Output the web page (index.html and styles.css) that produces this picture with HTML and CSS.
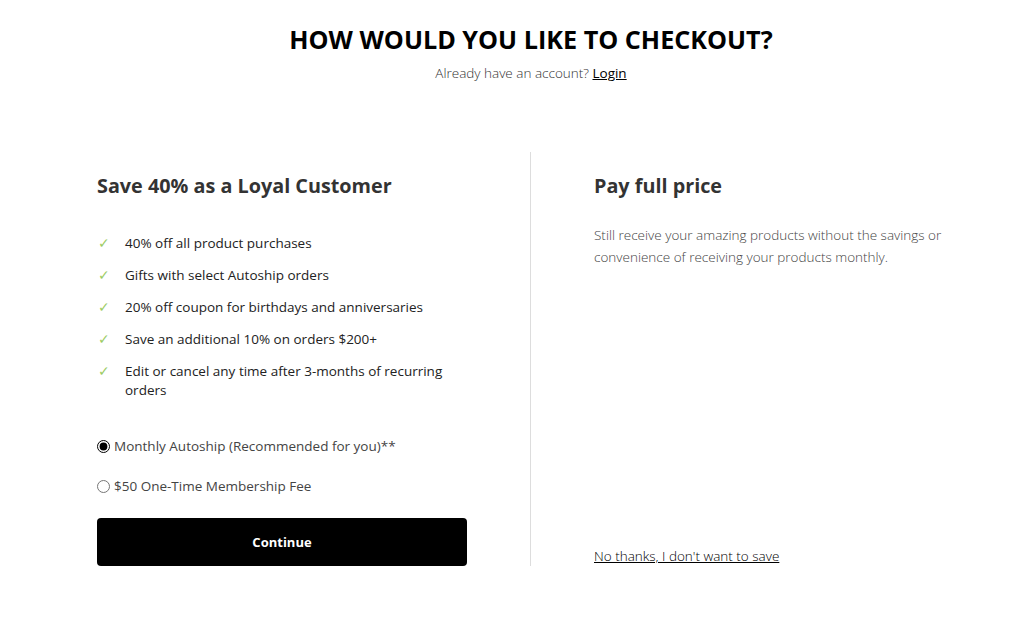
FILE: index.html
```html
<!DOCTYPE html>
<html lang="en">
<head>
    <meta charset="UTF-8">
    <meta name="viewport" content="width=device-width, initial-scale=1.0">
    <title>Checkout</title>
    <link rel="stylesheet" href="styles.css">
</head>
<body>
    <header class="page-head">
        <h1>HOW WOULD YOU LIKE TO CHECKOUT?</h1>
        <p class="login-line">Already have an account? <a href="#">Login</a></p>
    </header>

    <main class="options">
        <section class="option option-loyal">
            <h2>Save 40% as a Loyal Customer</h2>
            <ul class="perks">
                <li><span class="tick">&#10003;</span><span>40% off all product purchases</span></li>
                <li><span class="tick">&#10003;</span><span>Gifts with select Autoship orders</span></li>
                <li><span class="tick">&#10003;</span><span>20% off coupon for birthdays and anniversaries</span></li>
                <li><span class="tick">&#10003;</span><span>Save an additional 10% on orders $200+</span></li>
                <li><span class="tick">&#10003;</span><span>Edit or cancel any time after 3-months of recurring orders</span></li>
            </ul>
            <label class="plan"><input type="radio" name="plan" checked> Monthly Autoship (Recommended for you)**</label>
            <label class="plan"><input type="radio" name="plan"> $50 One-Time Membership Fee</label>
            <button class="continue-btn">Continue</button>
        </section>

        <section class="option option-full">
            <h2>Pay full price</h2>
            <p class="full-desc">Still receive your amazing products without the savings or convenience of receiving your products monthly.</p>
            <a href="#" class="no-thanks">No thanks, I don't want to save</a>
        </section>
    </main>
</body>
</html>
```

FILE: styles.css
```css
body {
    font-family: "Open Sans", Arial, sans-serif;
    margin: 0;
    padding: 0;
    color: #333;
    background: #fff;
}

.page-head {
    text-align: center;
    padding: 21px 0 0 44px;
}

.page-head h1 {
    margin: 0;
    font-size: 25.2px;
    font-weight: 700;
    color: #000;
    line-height: 36px;
}

.login-line {
    margin: 7px 0 0;
    font-size: 13.5px;
    font-weight: 300;
    color: #333;
}

.login-line a {
    color: #000;
    font-weight: 400;
}

.options {
    display: flex;
    margin-top: 70px;
    padding-left: 97px;
}

.option h2 {
    margin: 20px 0 0;
    font-size: 19.8px;
    font-weight: 700;
    color: #333;
    line-height: 28px;
}

.option-loyal {
    width: 370px;
    padding-right: 63px;
    border-right: 1px solid #ddd;
}

.perks {
    list-style: none;
    margin: 34px 0 0;
    padding: 0;
    width: 350px;
}

.perks li {
    display: flex;
    font-size: 13.5px;
    line-height: 19px;
    color: #222;
    margin-bottom: 13px;
}

.tick {
    color: #9ccc65;
    width: 27px;
    flex-shrink: 0;
    padding-left: 1px;
}

.plan {
    display: flex;
    align-items: center;
    font-size: 13.5px;
    color: #444;
    margin-top: 36px;
    line-height: 20px;
}

.plan + .plan {
    margin-top: 20px;
}

.plan input {
    margin: 0 4px 0 0;
    width: 13px;
    height: 13px;
    accent-color: #000;
}

.continue-btn {
    display: block;
    width: 370px;
    height: 48px;
    margin-top: 22px;
    background: #000;
    color: #fff;
    border: none;
    border-radius: 4px;
    font-family: "Open Sans", Arial, sans-serif;
    font-size: 13px;
    font-weight: 700;
    cursor: pointer;
}

.option-full {
    display: flex;
    flex-direction: column;
    padding-left: 63px;
    width: 380px;
}

.full-desc {
    margin: 24px 0 0;
    font-size: 13.5px;
    font-weight: 300;
    line-height: 22px;
    color: #444;
}

.no-thanks {
    margin-top: auto;
    font-size: 13.5px;
    font-weight: 300;
    color: #000;
    line-height: 19px;
}
```
